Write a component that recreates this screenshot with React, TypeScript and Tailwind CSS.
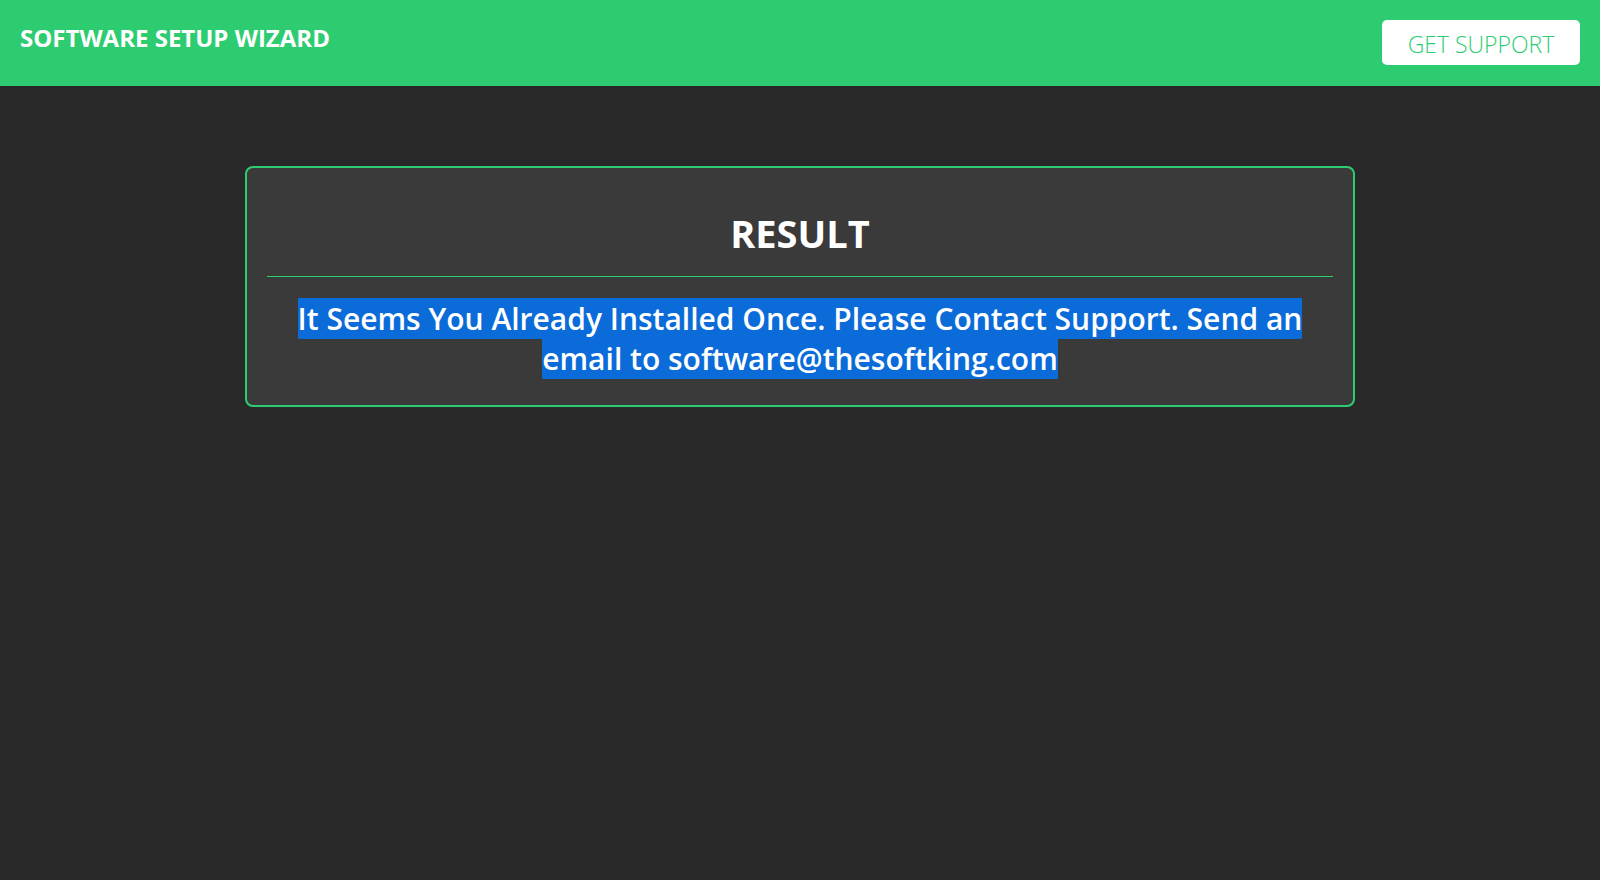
import React from "react";

export default function App() {
  return (
    <div
      className="min-h-[880px] w-full bg-[#292929]"
      style={{ fontFamily: '"Open Sans", "Noto Sans", sans-serif' }}
    >
      <header className="flex h-[86px] items-start justify-between bg-[#2ecc71] px-5 pt-5">
        <h1 className="mt-1 text-[24px] font-bold leading-[1.2] text-white">
          SOFTWARE SETUP WIZARD
        </h1>
        <button className="flex h-[45px] w-[198px] items-center justify-center rounded-[5px] bg-white pt-[3px] text-[23px] font-light text-[#2ecc71]">
          GET SUPPORT
        </button>
      </header>

      <main className="mx-auto mt-[80px] w-[1110px] rounded-lg border-2 border-[#2ecc71] bg-[#3a3a3a] px-5 pb-[26px] pt-[41px]">
        <h2 className="text-center text-[38px] font-bold leading-[48px] text-white">
          RESULT
        </h2>
        <hr className="mt-[19px] border-0 border-t border-[#2ecc71]" />
        <p className="mt-[22px] text-center text-[30px] font-semibold leading-[40px] text-white">
          <span className="bg-[#0b6bd9]">
            It Seems You Already Installed Once. Please Contact Support. Send an{" "}
          </span>
          <br />
          <span className="bg-[#0b6bd9]">email to software@thesoftking.com</span>
        </p>
      </main>
    </div>
  );
}
